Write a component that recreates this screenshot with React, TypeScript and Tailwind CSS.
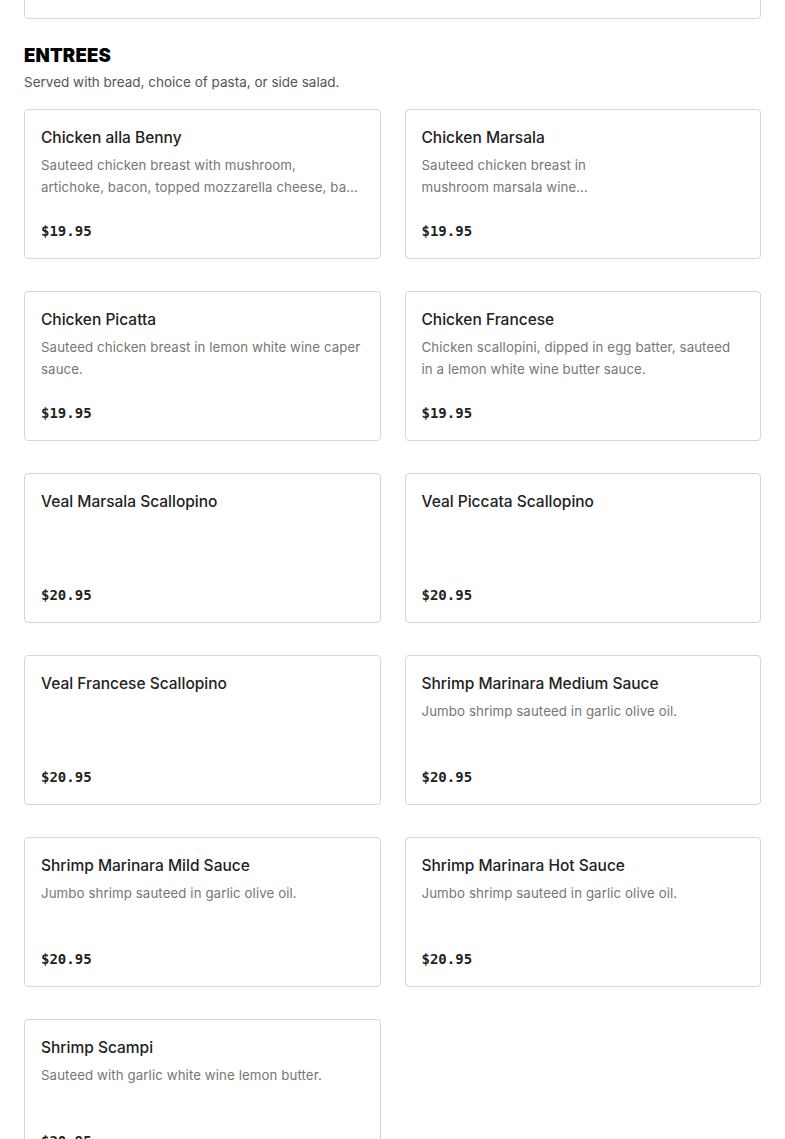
import React from "react";

type Item = {
  name: string;
  description?: string;
  price: string;
  clipWidth?: string;
};

const entrees: Item[] = [
  {
    name: "Chicken alla Benny",
    description:
      "Sauteed chicken breast with mushroom,\nartichoke, bacon, topped mozzarella cheese, basil and marsala wine sauce.",
    price: "$19.95",
  },
  {
    name: "Chicken Marsala",
    description: "Sauteed chicken breast in\nmushroom marsala wine sauce.",
    price: "$19.95",
    clipWidth: "w-[169px]",
  },
  {
    name: "Chicken Picatta",
    description: "Sauteed chicken breast in lemon white wine caper sauce.",
    price: "$19.95",
  },
  {
    name: "Chicken Francese",
    description:
      "Chicken scallopini, dipped in egg batter, sauteed in a lemon white wine butter sauce.",
    price: "$19.95",
  },
  { name: "Veal Marsala Scallopino", price: "$20.95" },
  { name: "Veal Piccata Scallopino", price: "$20.95" },
  { name: "Veal Francese Scallopino", price: "$20.95" },
  {
    name: "Shrimp Marinara Medium Sauce",
    description: "Jumbo shrimp sauteed in garlic olive oil.",
    price: "$20.95",
  },
  {
    name: "Shrimp Marinara Mild Sauce",
    description: "Jumbo shrimp sauteed in garlic olive oil.",
    price: "$20.95",
  },
  {
    name: "Shrimp Marinara Hot Sauce",
    description: "Jumbo shrimp sauteed in garlic olive oil.",
    price: "$20.95",
  },
  {
    name: "Shrimp Scampi",
    description: "Sauteed with garlic white wine lemon butter.",
    price: "$20.95",
  },
];

function MenuCard({ item }: { item: Item }) {
  const lines = item.description ? item.description.split("\n") : [];
  return (
    <div className="flex h-[150px] flex-col rounded-[4px] border border-[#d6d6d6] bg-white px-4 pt-4 pb-[17px]">
      <h3 className="text-[15.5px] leading-6 font-medium text-[#222]">{item.name}</h3>
      {lines.length > 1 ? (
        <p className="mt-1 text-[13.25px] leading-[22px] tracking-[0.1px] text-[#767676]">
          {lines[0]}
          <br />
          <span className={`block truncate ${item.clipWidth ?? "w-full"}`}>{lines[1]}</span>
        </p>
      ) : item.description ? (
        <p className="mt-1 line-clamp-2 text-[13.25px] leading-[22px] tracking-[0.1px] text-[#767676]">
          {item.description}
        </p>
      ) : null}
      <div className="mt-auto font-['DejaVu_Sans_Mono',monospace] text-[14px] leading-5 font-bold text-[#222]">
        {item.price}
      </div>
    </div>
  );
}

export default function App() {
  return (
    <div className="min-h-screen overflow-hidden bg-white font-['Inter',sans-serif]">
      <div className="mt-[-131px] px-6">
        <div className="h-[150px] rounded-[4px] border border-[#d6d6d6] bg-white" />

        <div className="mt-[22px]">
          <h2 className="text-[18.5px] leading-7 font-black tracking-[0.2px] text-black">
            ENTREES
          </h2>
          <p className="mt-[1px] text-[13.5px] leading-6 text-[#555]">
            Served with bread, choice of pasta, or side salad.
          </p>
        </div>

        <div className="mt-[15px] grid grid-cols-2 gap-x-6 gap-y-8">
          {entrees.map((item) => (
            <MenuCard key={item.name} item={item} />
          ))}
        </div>
      </div>
    </div>
  );
}
